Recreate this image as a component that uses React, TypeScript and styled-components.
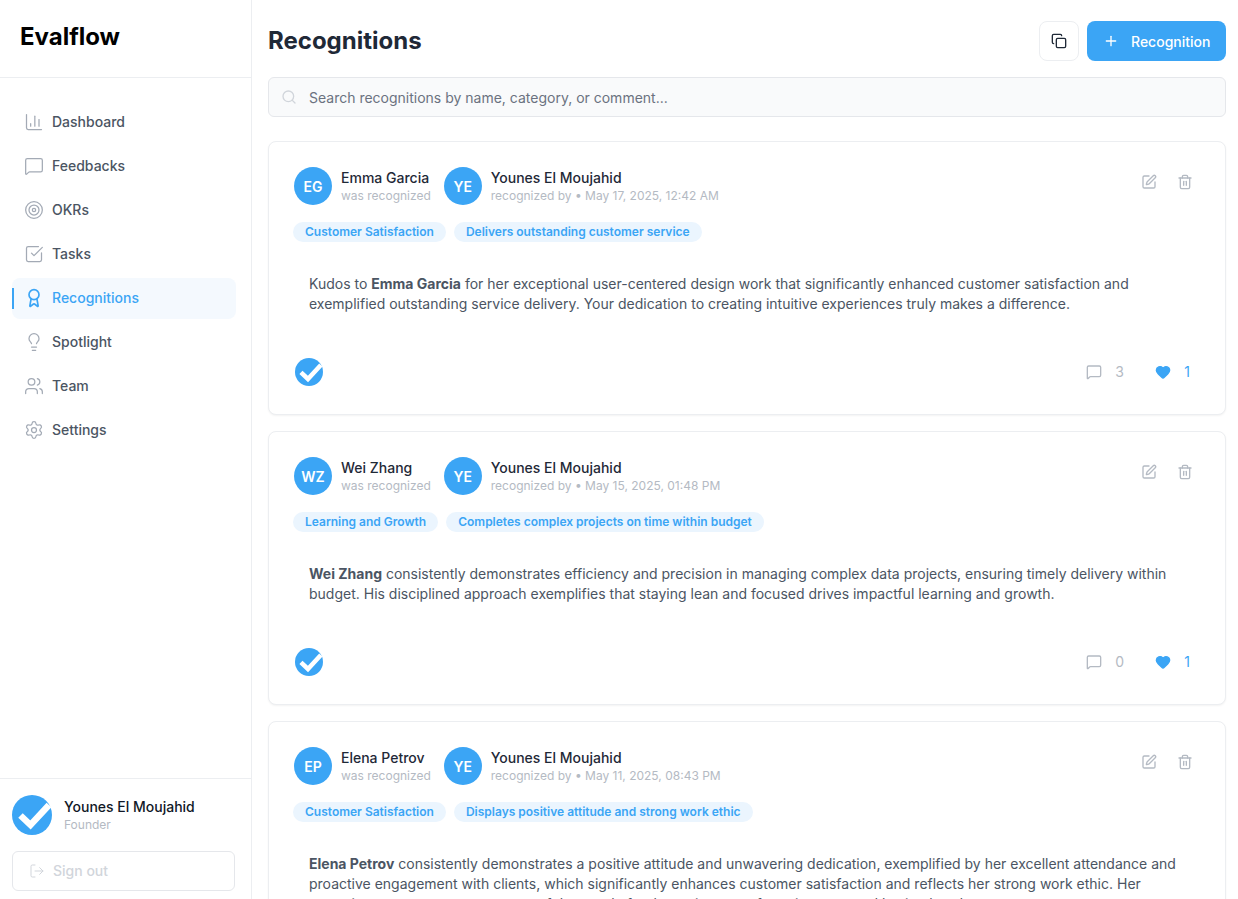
import React from "react";
import styled, { createGlobalStyle } from "styled-components";
import { ChartColumn, MessageSquare, Target, SquareCheckBig, Award, Lightbulb, Users, Settings, LogOut, Copy, Plus, Search, SquarePen, Trash2, Heart } from "lucide-react";

const Global = createGlobalStyle`
  html, body { margin: 0; padding: 0; height: 100%; overflow: hidden; background: #fff; }
  body { font-family: Inter, "Liberation Sans", sans-serif; color: #111827; }
  * { box-sizing: border-box; }
`;
const Shell = styled.div`display: flex; height: 100vh; overflow: hidden;`;
const Sidebar = styled.aside`width: 252px; flex: none; display: flex; flex-direction: column; border-right: 1px solid #eceef1; background: #fff;`;
const Brand = styled.div`height: 78px; padding: 21px 20px 0; border-bottom: 1px solid #eceef1; font-size: 24px; line-height: 32px; font-weight: 700; color: #000;`;
const Nav = styled.nav`flex: 1; display: flex; flex-direction: column; gap: 3px; padding: 24px 15px 0 12px;`;
const NavItem = styled.a<{ $active?: boolean }>`
  position: relative; height: 41px; padding: 0 0 2px 12px; display: flex; align-items: center; gap: 8px; border-radius: 8px;
  font-size: 14px; font-weight: 500; color: ${p => p.$active ? "#3ba5f5" : "#4b5563"}; background: ${p => p.$active ? "#f4f9fe" : "transparent"};
  svg { color: ${p => p.$active ? "#3ba5f5" : "#a3aab5"}; flex: none; }
  ${p => p.$active ? `&::before { content: ""; position: absolute; left: 0; top: 10px; width: 2px; height: 21px; background: #3ba5f5; }` : ""}
`;
const Foot = styled.div`border-top: 1px solid #eceef1; padding: 16px 16px 8px 12px; display: flex; flex-direction: column; gap: 16px;`;
const User = styled.div`display: flex; align-items: center; gap: 12px;`;
const UserName = styled.div`font-size: 14px; line-height: 20px; font-weight: 500; color: #111827;`;
const UserRole = styled.div`font-size: 12px; line-height: 16px; color: #b4bac3;`;
const SignOut = styled.div`height: 40px; border: 1px solid #e5e7eb; border-radius: 6px; display: flex; align-items: center; gap: 8px; padding: 0 0 1px 16px; font-size: 14px; font-weight: 500; color: #d1d5db;`;
const Main = styled.main`flex: 1; min-width: 0; padding: 21px 12px 0 16px; overflow: hidden;`;
const Header = styled.div`display: flex; align-items: center; justify-content: space-between; height: 40px;`;
const Title = styled.h1`margin: 0; font-size: 24px; line-height: 32px; font-weight: 700; color: #1f2937;`;
const Actions = styled.div`display: flex; gap: 8px;`;
const IconButton = styled.button`width: 40px; height: 40px; padding: 0; display: flex; align-items: center; justify-content: center; background: #fff; border: 1px solid #eceef1; border-radius: 8px; color: #1f2937;`;
const Primary = styled.button`height: 40px; width: 139px; padding: 0 16px; display: flex; align-items: center; gap: 12px; background: #3ba5f5; border: 0; border-radius: 8px; color: #fff; font: 500 14px Inter, sans-serif; white-space: nowrap; svg { flex: none; }`;
const SearchBox = styled.div`margin-top: 16px; height: 40px; display: flex; align-items: center; gap: 12px; padding-left: 12px; border: 1px solid #e5e7eb; border-radius: 6px; background: #f9fafb; font-size: 14px; color: #6b7280; svg { color: #d1d5db; }`;
const List = styled.div`margin-top: 24px; display: flex; flex-direction: column; gap: 16px;`;
const Card = styled.article`height: 274px; flex: none; border: 1px solid #eceef1; border-radius: 8px; padding: 25px 24px 0 25px; background: #fff; box-shadow: 0 1px 2px rgba(0,0,0,.05);`;
const CardTop = styled.div`display: flex; justify-content: space-between; align-items: flex-start;`;
const People = styled.div`display: flex; gap: 13px;`;
const Person = styled.div`display: flex; align-items: center; gap: 9px;`;
const Avatar = styled.div`width: 38px; height: 38px; border-radius: 50%; background: #3ba5f5; color: #fff; display: flex; align-items: center; justify-content: center; font-size: 14px; font-weight: 600;`;
const PName = styled.div`font-size: 14px; line-height: 20px; font-weight: 500; color: #1f2937;`;
const PSub = styled.div`font-size: 12px; line-height: 16px; color: #b4bac3;`;
const CardActions = styled.div`display: flex; gap: 20px; padding: 7px 8px 0 0; svg { color: #b4bac3; display: block; }`;
const Tags = styled.div`margin: 17px 0 0 -1px; display: flex; gap: 8px;`;
const Tag = styled.span`height: 20px; padding: 0 12px; border-radius: 10px; background: #ebf5fe; color: #3ba5f5; font-size: 12px; line-height: 20px; font-weight: 600;`;
const Body = styled.p`margin: 32px 0 0; padding: 0 15px; height: 60px; font-size: 14px; line-height: 20px; color: #4b5563; b { font-weight: 700; color: #4b5563; }`;
const Footer = styled.div`margin-top: 24px; padding-left: 1px; display: flex; align-items: center; justify-content: space-between;`;
const Stats = styled.div`display: flex; align-items: center; padding-right: 11px;`;
const Stat = styled.div<{ $on?: boolean }>`display: flex; align-items: center; gap: 13px; width: ${p => p.$on ? "auto" : "69px"}; height: 20px; font-size: 14px; color: ${p => p.$on ? "#3ba5f5" : "#b4bac3"}; svg { color: ${p => p.$on ? "#3ba5f5" : "#b4bac3"}; fill: ${p => p.$on ? "#3ba5f5" : "none"}; margin-top: -1px; }`;
const Count = styled.span`line-height: 18px;`;

const Check = ({ size }: { size: number }) => (
  <svg width={size} height={size} viewBox="0 0 40 40" aria-hidden="true">
    <circle cx="20" cy="20" r="20" fill="#3ba5f5" />
    <path d="M8.5 20.5 L18.5 30 L37 10" fill="none" stroke="#fff" strokeWidth="6.5" strokeLinejoin="miter" />
  </svg>
);

const nav = [
  ["Dashboard", ChartColumn], ["Feedbacks", MessageSquare], ["OKRs", Target], ["Tasks", SquareCheckBig],
  ["Recognitions", Award], ["Spotlight", Lightbulb], ["Team", Users], ["Settings", Settings],
] as const;

const cards = [
  { i: "EG", name: "Emma Garcia", date: "May 17, 2025, 12:42 AM", tags: ["Customer Satisfaction", "Delivers outstanding customer service"], c: 3,
    body: <>Kudos to <b>Emma Garcia</b> for her exceptional user-centered design work that significantly enhanced customer satisfaction and exemplified outstanding service delivery. Your dedication to creating intuitive experiences truly makes a difference.</> },
  { i: "WZ", name: "Wei Zhang", date: "May 15, 2025, 01:48 PM", tags: ["Learning and Growth", "Completes complex projects on time within budget"], c: 0,
    body: <><b>Wei Zhang</b> consistently demonstrates efficiency and precision in managing complex data projects, ensuring timely delivery within budget. His disciplined approach exemplifies that staying lean and focused drives impactful learning and growth.</> },
  { i: "EP", name: "Elena Petrov", date: "May 11, 2025, 08:43 PM", tags: ["Customer Satisfaction", "Displays positive attitude and strong work ethic"], c: 0,
    body: <><b>Elena Petrov</b> consistently demonstrates a positive attitude and unwavering dedication, exemplified by her excellent attendance and proactive engagement with clients, which significantly enhances customer satisfaction and reflects her strong work ethic. Her proactive engagement sets a powerful example for the entire team, fostering trust and lasting bonds.</> },
];

export default function App() {
  return (
    <Shell>
      <Global />
      <Sidebar>
        <Brand>Evalflow</Brand>
        <Nav>
          {nav.map(([label, Icon]) => (
            <NavItem key={label} $active={label === "Recognitions"}>
              <Icon size={20} strokeWidth={label === "Recognitions" ? 2 : 1.5} />{label}
            </NavItem>
          ))}
        </Nav>
        <Foot>
          <User>
            <Check size={40} />
            <div><UserName>Younes El Moujahid</UserName><UserRole>Founder</UserRole></div>
          </User>
          <SignOut><LogOut size={16} strokeWidth={1.5} />Sign out</SignOut>
        </Foot>
      </Sidebar>
      <Main>
        <Header>
          <Title>Recognitions</Title>
          <Actions>
            <IconButton><Copy size={16} /></IconButton>
            <Primary><Plus size={16} />Recognition</Primary>
          </Actions>
        </Header>
        <SearchBox><Search size={16} />Search recognitions by name, category, or comment...</SearchBox>
        <List>
          {cards.map(c => (
            <Card key={c.i}>
              <CardTop>
                <People>
                  <Person><Avatar>{c.i}</Avatar><div><PName>{c.name}</PName><PSub>was recognized</PSub></div></Person>
                  <Person><Avatar>YE</Avatar><div><PName>Younes El Moujahid</PName><PSub>recognized by • {c.date}</PSub></div></Person>
                </People>
                <CardActions><SquarePen size={16} /><Trash2 size={16} /></CardActions>
              </CardTop>
              <Tags>{c.tags.map(t => <Tag key={t}>{t}</Tag>)}</Tags>
              <Body>{c.body}</Body>
              <Footer>
                <Check size={28} />
                <Stats>
                  <Stat><MessageSquare size={16} /><Count>{c.c}</Count></Stat>
                  <Stat $on><Heart size={16} /><Count>1</Count></Stat>
                </Stats>
              </Footer>
            </Card>
          ))}
        </List>
      </Main>
    </Shell>
  );
}
